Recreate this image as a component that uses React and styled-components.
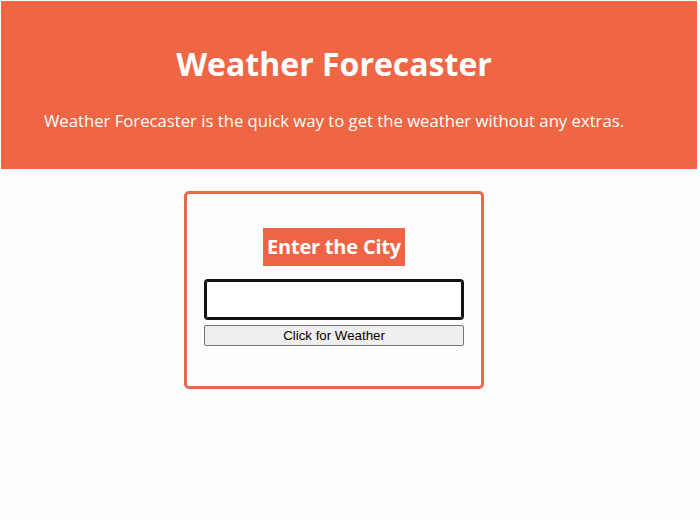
import React, { useState } from "react";
import styled, { createGlobalStyle } from "styled-components";

const GlobalStyle = createGlobalStyle`
  html, body {
    margin: 0;
    padding: 0;
    background: #fdfdff;
  }
  body {
    padding: 1px 3px 0 1px;
    font-family: "Open Sans", "DejaVu Sans", sans-serif;
  }
`;

export default function App() {
  const [city, setCity] = useState("");

  return (
    <>
      <GlobalStyle />
      <Header>
        <Title>Weather Forecaster</Title>
        <Intro>Weather Forecaster is the quick way to get the weather without any extras.</Intro>
      </Header>
      <Main>
        <Card>
          <Label>Enter the City</Label>
          <CityInput
            autoFocus
            value={city}
            onChange={(e) => setCity(e.target.value)}
          />
          <Button type="button">Click for Weather</Button>
        </Card>
      </Main>
    </>
  );
}

const Header = styled.header`
  background: #ef6644;
  color: #fff;
  height: 168px;
  padding: 0 30px 0 0;
  box-sizing: border-box;
  display: flex;
  flex-direction: column;
  align-items: center;
  overflow: hidden;
`;

const Title = styled.h1`
  margin: 41px 0 0;
  font-size: 32px;
  font-weight: 700;
  line-height: 44px;
`;

const Intro = styled.p`
  margin: 23px 0 0;
  font-size: 16.7px;
  line-height: 23px;
`;

const Main = styled.main`
  display: flex;
  justify-content: center;
  padding: 22px 30px 0 0;
`;

const Card = styled.div`
  width: 300px;
  height: 198px;
  box-sizing: border-box;
  border: 3px solid #e8694a;
  border-radius: 5px;
  display: flex;
  flex-direction: column;
  align-items: center;
  padding: 34px 17px 0;
`;

const Label = styled.h2`
  margin: 0 0 13px;
  background: #ee6444;
  color: #fff;
  font-size: 20px;
  font-weight: 700;
  line-height: 38px;
  padding: 0 4px;
  letter-spacing: -0.2px;
`;

const CityInput = styled.input`
  width: 260px;
  height: 41px;
  box-sizing: border-box;
  border: 2px solid #111;
  border-radius: 4px;
  outline: 1px solid #111;
  outline-offset: -3px;
  padding: 0 8px;
  font-size: 16px;
  font-family: "Liberation Sans", Arial, sans-serif;
  background: #fff;
`;

const Button = styled.button`
  margin-top: 5px;
  width: 260px;
  height: 21px;
  box-sizing: border-box;
  background: #efefef;
  border: 1px solid #767676;
  border-radius: 2px;
  font-family: "Liberation Sans", Arial, sans-serif;
  font-size: 13.3px;
  color: #000;
  padding: 0;
`;
